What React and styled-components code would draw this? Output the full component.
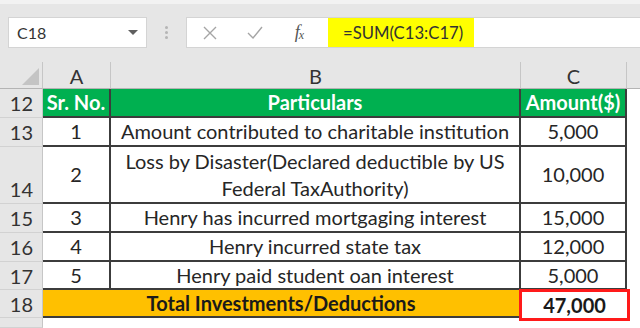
import React from "react";
import styled, { createGlobalStyle } from "styled-components";

const Global = createGlobalStyle`
  html, body { margin: 0; padding: 0; background: #ffffff; }
  body { font-family: Lato, "Open Sans", sans-serif; }
  #root { width: 640px; height: 328px; overflow: hidden; }
`;

const Page = styled.div`
  width: 640px;
  height: 328px;
  display: flex;
  flex-direction: column;
  background: #e6e6e6;
  overflow: hidden;
`;

const Toolbar = styled.div`
  height: 62px;
  box-sizing: border-box;
  border-top: 4px solid #f2f2f2;
  padding: 13px 0 0 8px;
  display: flex;
  align-items: flex-start;
`;

const NameBox = styled.div`
  width: 139px;
  height: 31px;
  box-sizing: border-box;
  background: #fff;
  border: 1px solid #d4d4d4;
  display: flex;
  align-items: center;
  justify-content: space-between;
  padding: 0 8px 0 8px;
  font-size: 16px;
  color: #333;
`;

const Caret = styled.span`
  width: 0;
  height: 0;
  border-left: 5px solid transparent;
  border-right: 5px solid transparent;
  border-top: 5px solid #5f5f5f;
`;

const Dots = styled.div`
  width: 39px;
  height: 31px;
  display: flex;
  flex-direction: column;
  align-items: center;
  justify-content: center;
  gap: 2px;
  & > span {
    width: 3px;
    height: 3px;
    border-radius: 50%;
    background: #b5b5b5;
  }
`;

const FormulaBox = styled.div`
  flex: 1;
  height: 31px;
  box-sizing: border-box;
  background: #fff;
  border: 1px solid #d4d4d4;
  border-right: none;
  display: flex;
  align-items: center;
`;

const IconSlot = styled.div`
  width: ${(p) => p.$w}px;
  height: 100%;
  display: flex;
  align-items: center;
  justify-content: center;
  color: #a9a9a9;
`;

const Fx = styled.span`
  font-family: "Liberation Serif", serif;
  font-style: italic;
  font-size: 18px;
  color: #555;
  letter-spacing: -1px;
  & > sub { font-size: 12px; vertical-align: -1px; }
`;

const Formula = styled.div`
  height: 100%;
  width: 146px;
  background: #ffff00;
  box-sizing: border-box;
  padding-left: 15px;
  display: flex;
  align-items: center;
  font-size: 16.7px;
  color: #333;
`;

const Sheet = styled.div`
  flex: 1;
  display: grid;
  grid-template-columns: 43px 68px 410px 106px 1fr;
  grid-template-rows: 27px 29px 29px 57px 29px 29px 28px 28px 1fr;
  background: #fff;
  font-size: 20px;
  color: #262626;
`;

const Corner = styled.div`
  background: #e6e6e6;
  border-right: 1px solid #c6c6c6;
  border-bottom: 1px solid #b4b4b4;
  position: relative;
  &::after {
    content: "";
    position: absolute;
    right: 3px;
    bottom: 3px;
    width: 0;
    height: 0;
    border-left: 17px solid transparent;
    border-bottom: 17px solid #c4c4c4;
  }
`;

const ColHead = styled.div`
  background: #e6e6e6;
  border-right: ${(p) => (p.$last ? "none" : "1px solid #c6c6c6")};
  border-bottom: 1px solid #b4b4b4;
  display: flex;
  align-items: center;
  justify-content: center;
  padding-top: 2px;
  color: #333;
  font-size: 20px;
`;

const RowHead = styled.div`
  background: #e6e6e6;
  border-right: 1px solid #c6c6c6;
  border-bottom: 1px solid #d2d2d2;
  display: flex;
  align-items: ${(p) => (p.$bottom ? "flex-end" : "center")};
  justify-content: flex-end;
  padding: 0 9px ${(p) => (p.$bottom ? "2px" : "0")} 0;
  color: #333;
  font-size: 20px;
`;

const Cell = styled.div`
  display: flex;
  flex-direction: column;
  align-items: center;
  justify-content: center;
  text-align: center;
  line-height: 27px;
  background: ${(p) => p.$bg || "#fff"};
  color: ${(p) => p.$color || "#262626"};
  font-weight: ${(p) => (p.$bold ? 700 : 400)};
  border-right: 2px solid #3c3c3c;
  border-bottom: 2px solid #3c3c3c;
  grid-column: ${(p) => p.$span || "auto"};
  white-space: nowrap;
`;

const TotalCell = styled(Cell)`
  position: relative;
  z-index: 1;
  border: none;
  box-sizing: border-box;
  box-shadow: inset 0 0 0 3px #ff1a1a;
  margin: -1px -3px -3px -2px;
  font-weight: 700;
  color: #1a1a1a;
`;

const Blank = styled.div`
  background: #fff;
`;

const rows = [
  { n: 13, sr: "1", text: ["Amount contributed to charitable institution"], amt: "5,000" },
  { n: 14, sr: "2", text: ["Loss by Disaster(Declared deductible by US", "Federal TaxAuthority)"], amt: "10,000", tall: true },
  { n: 15, sr: "3", text: ["Henry has incurred mortgaging interest"], amt: "15,000" },
  { n: 16, sr: "4", text: ["Henry incurred state tax"], amt: "12,000" },
  { n: 17, sr: "5", text: ["Henry paid student oan interest"], amt: "5,000" },
];

export default function App() {
  return (
    <>
      <Global />
      <Page>
        <Toolbar>
          <NameBox>
            C18
            <Caret />
          </NameBox>
          <Dots>
            <span />
            <span />
            <span />
          </Dots>
          <FormulaBox>
            <IconSlot $w={46}>
              <svg width="14" height="14" viewBox="0 0 14 14">
                <path d="M1 1L13 13M13 1L1 13" stroke="#a5a5a5" strokeWidth="1.4" fill="none" />
              </svg>
            </IconSlot>
            <IconSlot $w={44}>
              <svg width="16" height="13" viewBox="0 0 16 13">
                <path d="M1 7L6 12L15 1" stroke="#a5a5a5" strokeWidth="1.4" fill="none" />
              </svg>
            </IconSlot>
            <IconSlot $w={44}>
              <Fx>
                f<sub>x</sub>
              </Fx>
            </IconSlot>
            <IconSlot $w={7} />
            <Formula>=SUM(C13:C17)</Formula>
          </FormulaBox>
        </Toolbar>
        <Sheet>
          <Corner />
          <ColHead>A</ColHead>
          <ColHead>B</ColHead>
          <ColHead>C</ColHead>
          <ColHead $last />

          <RowHead>12</RowHead>
          <Cell $bg="#00b050" $color="#fff" $bold>Sr. No.</Cell>
          <Cell $bg="#00b050" $color="#fff" $bold>Particulars</Cell>
          <Cell $bg="#00b050" $color="#fff" $bold>Amount($)</Cell>
          <Blank />

          {rows.map((r) => (
            <React.Fragment key={r.n}>
              <RowHead $bottom={r.tall}>{r.n}</RowHead>
              <Cell>{r.sr}</Cell>
              <Cell>
                {r.text.map((t) => (
                  <span key={t}>{t}</span>
                ))}
              </Cell>
              <Cell>{r.amt}</Cell>
              <Blank />
            </React.Fragment>
          ))}

          <RowHead>18</RowHead>
          <Cell $bg="#ffc000" $color="#1a1a1a" $bold $span="span 2">
            Total Investments/Deductions
          </Cell>
          <TotalCell>47,000</TotalCell>
          <Blank />

          <RowHead />
          <Blank />
          <Blank />
          <Blank />
          <Blank />
        </Sheet>
      </Page>
    </>
  );
}
